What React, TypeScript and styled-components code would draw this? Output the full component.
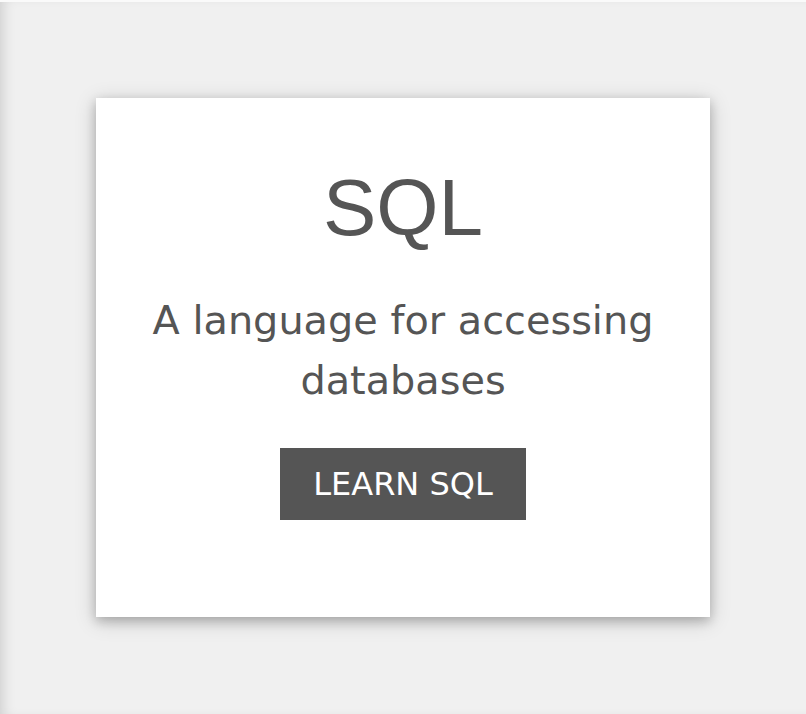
import React from "react";
import styled, { createGlobalStyle } from "styled-components";

const Global = createGlobalStyle`
  html, body { margin: 0; padding: 0; background: #f0f0f0; }
  #root { min-height: 100vh; }
`;

const Page = styled.main`
  box-sizing: border-box;
  min-height: 100vh;
  background: #f0f0f0;
  border-top: 2px solid #fafafa;
  padding: 96px 96px 40px 96px;
  box-shadow: inset 10px 0 14px -8px rgba(0, 0, 0, 0.16);
`;

const Card = styled.section`
  box-sizing: border-box;
  width: 614px;
  height: 519px;
  background: #ffffff;
  box-shadow: 0 4px 10px 0 rgba(0, 0, 0, 0.2), 0 4px 20px 0 rgba(0, 0, 0, 0.19);
  padding-top: 70px;
  display: flex;
  flex-direction: column;
  align-items: center;
  text-align: center;
  color: #555555;
`;

const Title = styled.h1`
  margin: 0;
  font-family: "Liberation Sans", Arial, sans-serif;
  font-weight: 400;
  font-size: 80px;
  line-height: 80px;
`;

const Lead = styled.p`
  margin: 42px 0 0 0;
  font-family: "DejaVu Sans", Verdana, sans-serif;
  font-size: 39.8px;
  line-height: 60px;
  max-width: 560px;
`;

const Button = styled.a`
  display: inline-block;
  margin-top: 38px;
  background: #555555;
  color: #ffffff;
  font-family: "DejaVu Sans", Verdana, sans-serif;
  font-size: 32px;
  line-height: 48px;
  padding: 12px 33px;
  text-decoration: none;
  cursor: pointer;
`;

export default function App() {
  return (
    <>
      <Global />
      <Page>
        <Card>
          <Title>SQL</Title>
          <Lead>A language for accessing databases</Lead>
          <Button>LEARN SQL</Button>
        </Card>
      </Page>
    </>
  );
}
